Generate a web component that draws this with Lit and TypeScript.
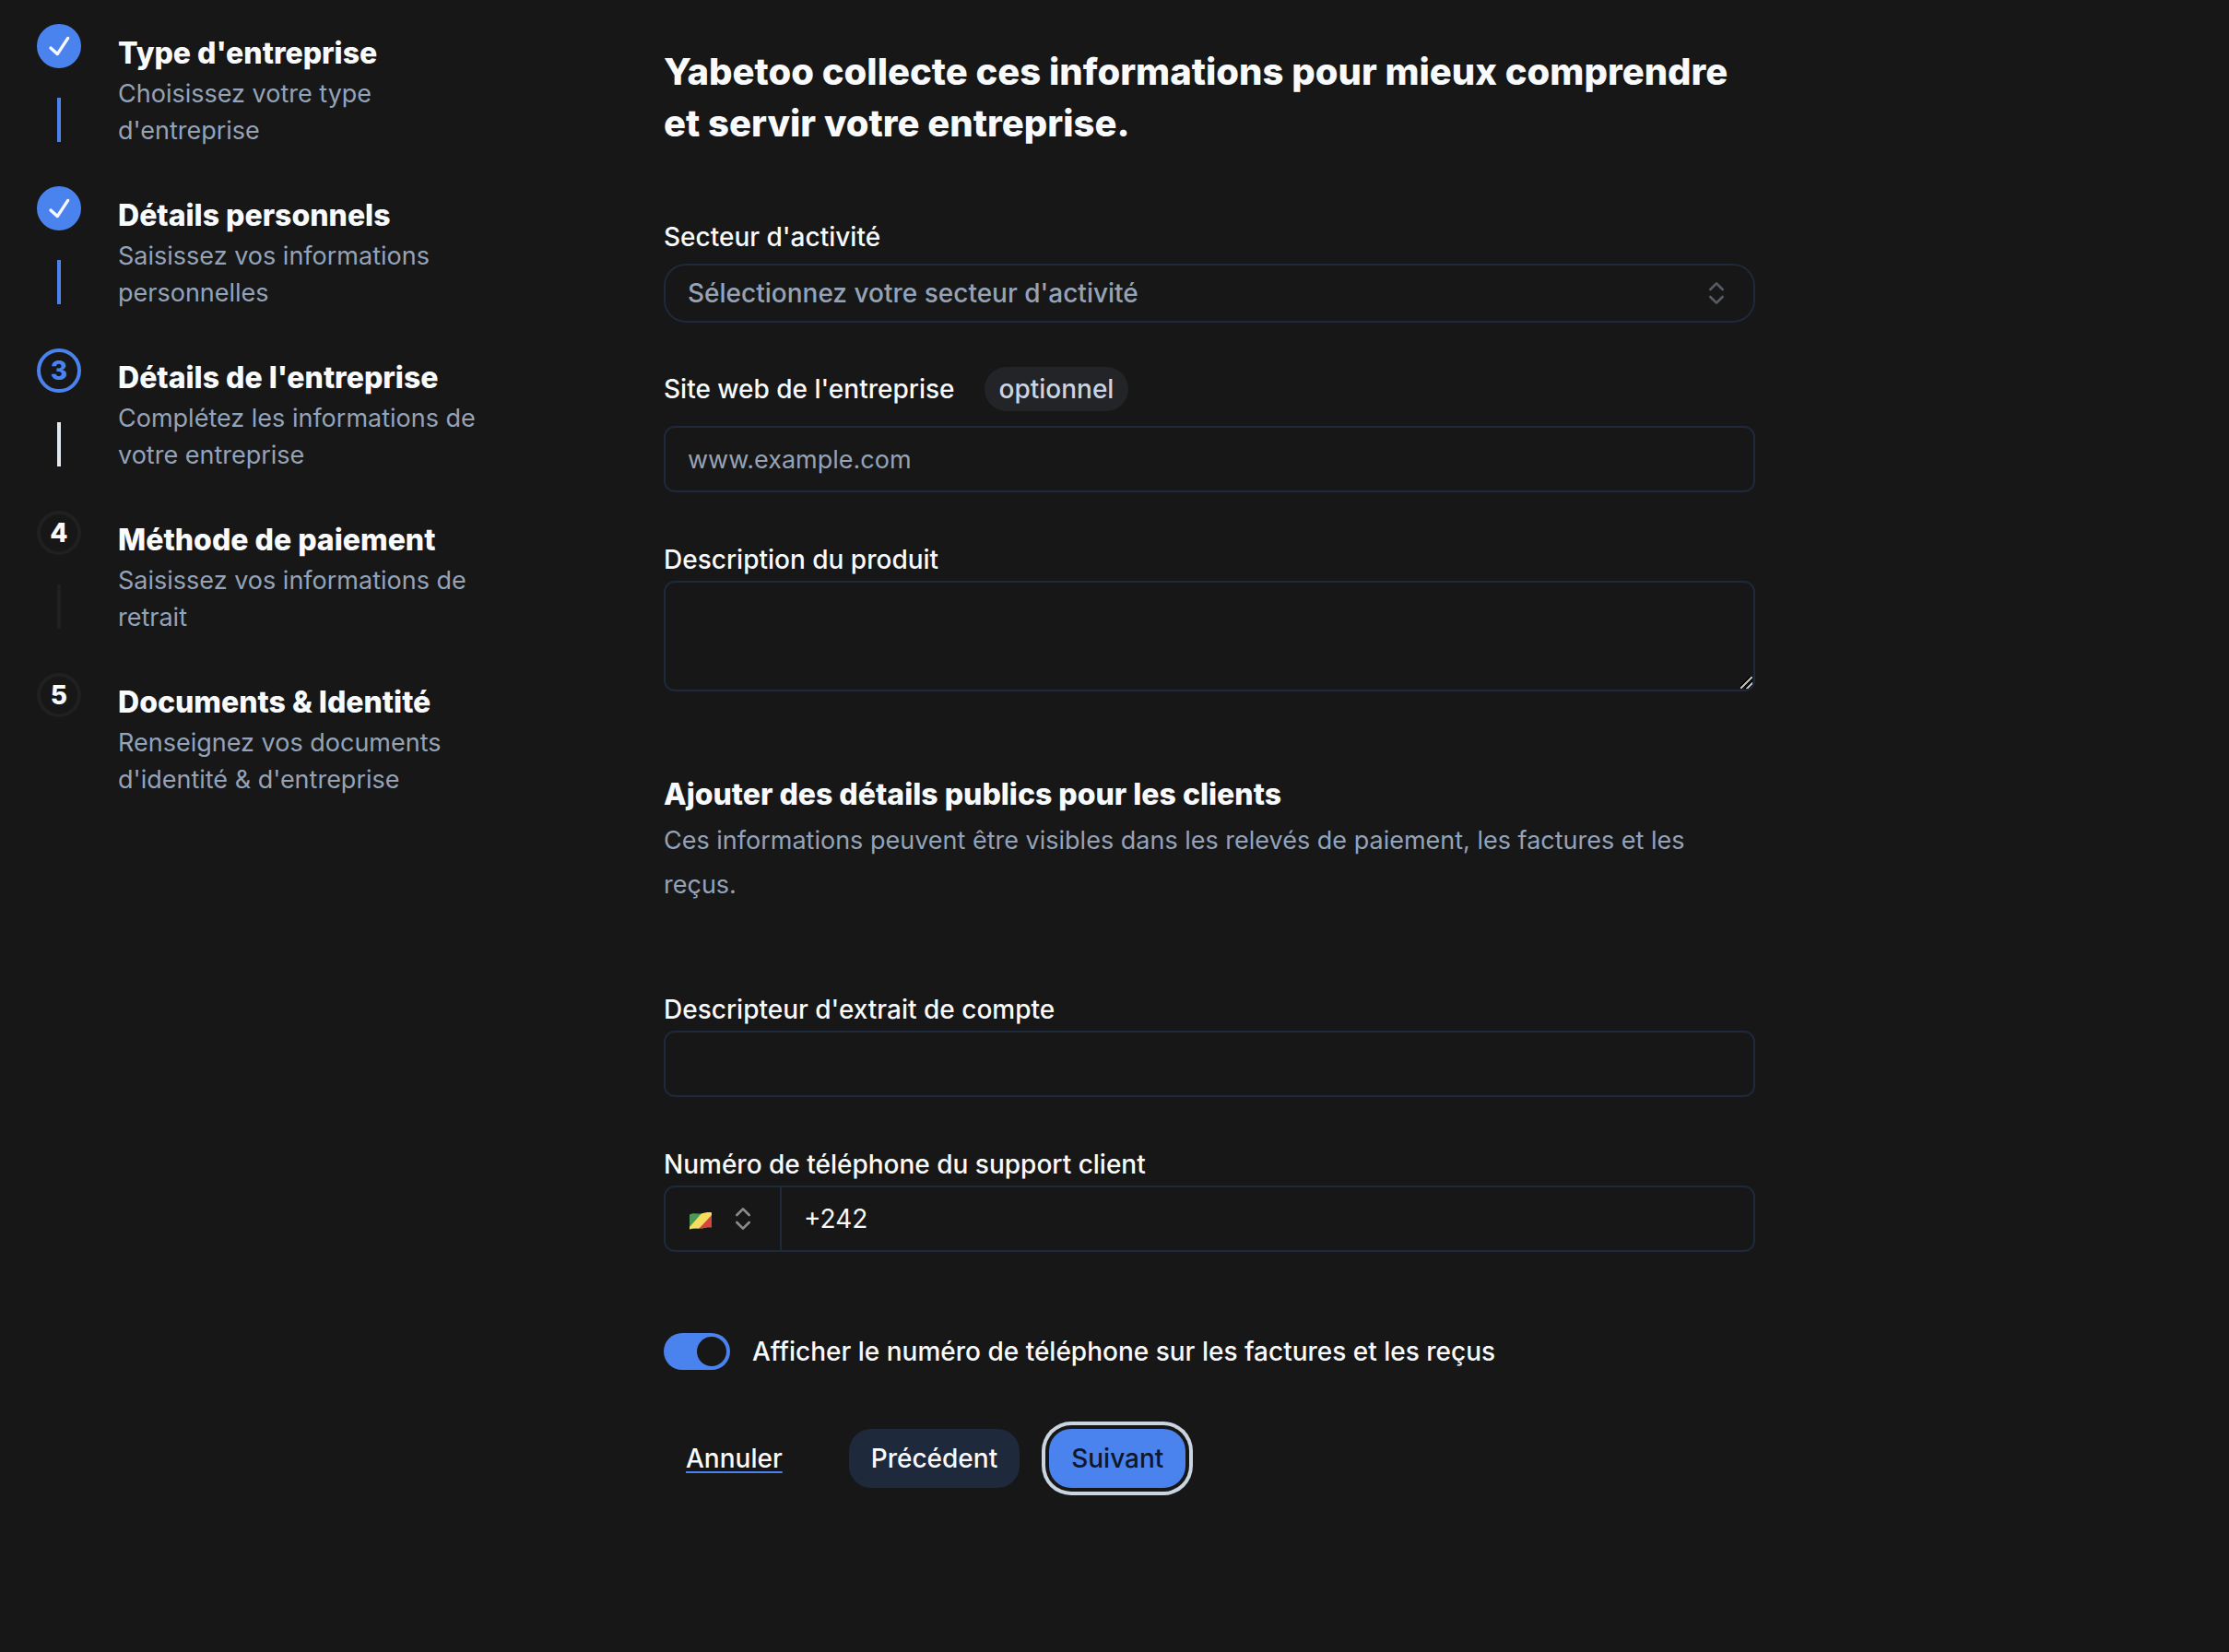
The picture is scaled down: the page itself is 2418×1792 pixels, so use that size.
import { LitElement, html, svg, css } from "lit";
import { customElement, state } from "lit/decorators.js";
import { classMap } from "lit/directives/class-map.js";

type StepState = "done" | "current" | "todo";

interface Step {
  title: string;
  text: string;
  state: StepState;
}

const STEPS: Step[] = [
  { title: "Type d'entreprise", text: "Choisissez votre type d'entreprise", state: "done" },
  { title: "Détails personnels", text: "Saisissez vos informations personnelles", state: "done" },
  { title: "Détails de l'entreprise", text: "Complétez les informations de votre entreprise", state: "current" },
  { title: "Méthode de paiement", text: "Saisissez vos informations de retrait", state: "todo" },
  { title: "Documents & Identité", text: "Renseignez vos documents d'identité & d'entreprise", state: "todo" },
];

const chevrons = html`<svg class="chevrons" viewBox="0 0 24 24" aria-hidden="true">
  ${svg`<path d="m7 15 5 5 5-5" /><path d="m7 9 5-5 5 5" />`}
</svg>`;

@customElement("step-list")
export class StepList extends LitElement {
  static styles = css`
    :host {
      display: block;
    }
    .steps {
      display: flex;
      flex-direction: column;
      gap: 40px;
      margin: 0;
      padding: 0;
      list-style: none;
    }
    .step {
      display: flex;
      gap: 40px;
    }
    .rail {
      display: flex;
      flex: none;
      flex-direction: column;
      align-items: center;
      gap: 32px;
    }
    .dot {
      display: flex;
      align-items: center;
      justify-content: center;
      box-sizing: border-box;
      width: 48px;
      height: 48px;
      border: 4px solid #202020;
      border-radius: 50%;
      color: #f8fafc;
      font-size: 28px;
      font-weight: 800;
      line-height: 40px;
    }
    .done .dot {
      border-color: #4a83ee;
      background: #4a83ee;
    }
    .current .dot {
      border-color: #4a83ee;
      color: #4a83ee;
    }
    .check {
      width: 40px;
      height: 40px;
      fill: currentColor;
    }
    .line {
      width: 4px;
      height: 48px;
      background: #202020;
    }
    .done .line {
      background: #4a83ee;
    }
    .current .line {
      background: #e2e8f0;
    }
    .text {
      max-width: 416px;
      padding-top: 8px;
    }
    .title {
      margin: 0;
      color: #f8fafc;
      font-size: 32px;
      font-weight: 800;
      line-height: 48px;
    }
    .desc {
      margin: 0;
      color: #94a3b8;
      font-size: 27px;
      line-height: 40px;
    }
  `;

  render() {
    return html`<ol class="steps">
      ${STEPS.map(
        (step, i) => html`<li class=${classMap({ step: true, [step.state]: true })}>
          <div class="rail">
            <div class="dot">
              ${step.state === "done"
                ? html`<svg class="check" viewBox="0 0 15 15" aria-hidden="true">
                    <path
                      fill-rule="evenodd"
                      d="M11.4669 3.72684C11.7558 3.91574 11.8369 4.30308 11.648 4.59198L7.39799 11.092C7.29783 11.2452 7.13556 11.3467 6.95402 11.3699C6.77247 11.3931 6.58989 11.3355 6.45446 11.2124L3.70446 8.71241C3.44905 8.48022 3.43023 8.08494 3.66242 7.82953C3.89461 7.57412 4.28989 7.55529 4.5453 7.78749L6.75292 9.79441L10.6018 3.90792C10.7907 3.61902 11.178 3.53795 11.4669 3.72684Z"
                    />
                  </svg>`
                : i + 1}
            </div>
            ${i < STEPS.length - 1 ? html`<div class="line"></div>` : ""}
          </div>
          <div class="text">
            <h2 class="title">${step.title}</h2>
            <p class="desc">${step.text}</p>
          </div>
        </li>`
      )}
    </ol>`;
  }
}

@customElement("app-root")
export class AppRoot extends LitElement {
  @state() private showPhone = true;

  static styles = css`
    :host {
      display: block;
      box-sizing: border-box;
      min-height: 100vh;
      padding: 26px 0 48px 40px;
      background: #171717;
      color: #f8fafc;
      font-family: Inter, "Liberation Sans", sans-serif;
    }
    .page {
      display: grid;
      grid-template-columns: minmax(0, 680fr) minmax(0, 1184fr) minmax(0, 514fr);
      align-items: start;
    }
    .form {
      padding-top: 24px;
    }
    .heading {
      margin: 0 0 80px;
      font-size: 40px;
      font-weight: 800;
      line-height: 56px;
    }
    .field {
      display: flex;
      flex-direction: column;
      gap: 8px;
      margin-bottom: 58px;
    }
    .website {
      gap: 16px;
    }
    .sector {
      gap: 14px;
      margin-bottom: 48px;
    }
    .product {
      margin-bottom: 86px;
    }
    .phone-field {
      margin-bottom: 88px;
    }
    .label-row {
      display: flex;
      align-items: center;
      gap: 32px;
    }
    .label {
      font-size: 28px;
      font-weight: 500;
      line-height: 30px;
    }
    .pill {
      padding: 4px 16px;
      border-radius: 24px;
      background: #232428;
      color: #cbd5e1;
      font-size: 28px;
      font-weight: 500;
      line-height: 40px;
    }
    .control {
      box-sizing: border-box;
      width: 100%;
      margin: 0;
      border: 2px solid #1e293b;
      border-radius: 12px;
      outline: none;
      background: transparent;
      color: #f8fafc;
      font: inherit;
      font-size: 28px;
      line-height: 40px;
    }
    .input {
      height: 72px;
      padding: 0 24px;
    }
    .input::placeholder {
      color: #94a3b8;
      font-size: 27px;
      opacity: 1;
    }
    .area {
      display: block;
      height: 120px;
      padding: 16px 24px;
      resize: vertical;
      color-scheme: dark;
    }
    .area::-webkit-resizer {
      background: linear-gradient(
          135deg,
          transparent 7px,
          #000 7px 8px,
          #b8b8b8 8px 10px,
          #000 10px 11px,
          transparent 11px 12px,
          #000 12px 13px,
          #b8b8b8 13px 15px,
          #000 15px 16px,
          transparent 16px
        )
        1px 1px / 13px 13px no-repeat;
    }
    .select-box {
      display: grid;
      align-items: center;
    }
    .select-box > * {
      grid-area: 1 / 1;
    }
    .select {
      height: 64px;
      padding: 0 72px 0 24px;
      border-radius: 24px;
      appearance: none;
      color: #94a3b8;
      font-weight: 500;
    }
    .chevrons {
      display: block;
      width: 32px;
      height: 32px;
      fill: none;
      stroke: #8b8b8b;
      stroke-width: 2;
      stroke-linecap: round;
      stroke-linejoin: round;
    }
    .select-box .chevrons {
      justify-self: end;
      margin-right: 26px;
      stroke: #575c64;
      pointer-events: none;
    }
    .section-title {
      margin: 0;
      font-size: 32px;
      font-weight: 800;
      line-height: 52px;
    }
    .section-text {
      margin: 0 0 96px;
      color: #94a3b8;
      font-size: 27px;
      line-height: 48px;
    }
    .phone {
      display: flex;
    }
    .country {
      display: flex;
      flex: none;
      align-items: center;
      gap: 18px;
      box-sizing: border-box;
      height: 72px;
      padding: 4px 24px 0 26px;
      border: 2px solid #1e293b;
      border-right: 0;
      border-radius: 12px 0 0 12px;
      background: transparent;
    }
    .country .chevrons {
      margin-bottom: 4px;
    }
    .flag {
      width: 24px;
      height: 20px;
    }
    .number {
      border-radius: 0 12px 12px 0;
    }
    .switch-row {
      display: flex;
      align-items: center;
      gap: 24px;
      margin-bottom: 64px;
    }
    .switch {
      flex: none;
      box-sizing: border-box;
      width: 72px;
      height: 40px;
      margin: 0;
      padding: 4px;
      border-radius: 20px;
      appearance: none;
      background: #1e293b;
    }
    .switch::before {
      content: "";
      display: block;
      width: 32px;
      height: 32px;
      border-radius: 50%;
      background: #171717;
    }
    .switch:checked {
      background: #4a83ee;
    }
    .switch:checked::before {
      margin-left: 32px;
    }
    .actions {
      display: flex;
      align-items: center;
      gap: 32px;
    }
    .button {
      height: 64px;
      padding: 0 24px;
      border: 0;
      border-radius: 24px;
      background: #1e293b;
      color: #f8fafc;
      font: inherit;
      font-size: 28px;
      font-weight: 500;
      line-height: 40px;
    }
    .cancel {
      margin-right: 16px;
      background: none;
      text-decoration: underline;
      text-decoration-color: #4a83ee;
      text-decoration-thickness: 2px;
      text-underline-offset: 4px;
    }
    .next {
      background: #4a83ee;
      color: #0f172a;
      box-shadow: 0 0 0 4px #171717, 0 0 0 8px #cbd5e1;
    }
  `;

  private onToggle(e: Event) {
    this.showPhone = (e.target as HTMLInputElement).checked;
  }

  render() {
    return html`<main class="page">
      <step-list></step-list>
      <form class="form" @submit=${(e: Event) => e.preventDefault()}>
        <h1 class="heading">Yabetoo collecte ces informations pour mieux comprendre et servir votre entreprise.</h1>

        <div class="field sector">
          <label class="label" for="sector">Secteur d'activité</label>
          <div class="select-box">
            <select class="control select" id="sector">
              <option>Sélectionnez votre secteur d'activité</option>
            </select>
            ${chevrons}
          </div>
        </div>

        <div class="field website">
          <div class="label-row">
            <label class="label" for="site">Site web de l'entreprise</label>
            <span class="pill">optionnel</span>
          </div>
          <input class="control input" id="site" type="text" placeholder="www.example.com" />
        </div>

        <div class="field product">
          <label class="label" for="product">Description du produit</label>
          <textarea class="control area" id="product"></textarea>
        </div>

        <h2 class="section-title">Ajouter des détails publics pour les clients</h2>
        <p class="section-text">
          Ces informations peuvent être visibles dans les relevés de paiement, les factures et les reçus.
        </p>

        <div class="field">
          <label class="label" for="descriptor">Descripteur d'extrait de compte</label>
          <input class="control input" id="descriptor" type="text" />
        </div>

        <div class="field phone-field">
          <label class="label" for="phone">Numéro de téléphone du support client</label>
          <div class="phone">
            <button class="country" type="button" aria-label="Pays">
              <svg class="flag" viewBox="0 0 24 20" aria-hidden="true">
                <defs>
                  <clipPath id="wave">
                    <path d="M0 3.4C4 1.2 8 2.6 12 2.4S20 .2 24 1.4V17.6C20 16.4 16 18.4 12 18.6S4 17.6 0 19.4Z" />
                  </clipPath>
                </defs>
                <g clip-path="url(#wave)">
                  <rect width="24" height="20" fill="#4a9a55" />
                  <path d="M24 0V20H8Z" fill="#d2473d" />
                  <path d="M15 0H24V4L9 20H0V17Z" fill="#f6dc5f" />
                </g>
              </svg>
              ${chevrons}
            </button>
            <input class="control input number" id="phone" type="tel" .value=${"+242"} />
          </div>
        </div>

        <div class="switch-row">
          <input
            class="switch"
            id="show-phone"
            type="checkbox"
            role="switch"
            .checked=${this.showPhone}
            @change=${this.onToggle}
          />
          <label class="label" for="show-phone">Afficher le numéro de téléphone sur les factures et les reçus</label>
        </div>

        <div class="actions">
          <button class="button cancel" type="button">Annuler</button>
          <button class="button" type="button">Précédent</button>
          <button class="button next" type="submit">Suivant</button>
        </div>
      </form>
    </main>`;
  }
}
